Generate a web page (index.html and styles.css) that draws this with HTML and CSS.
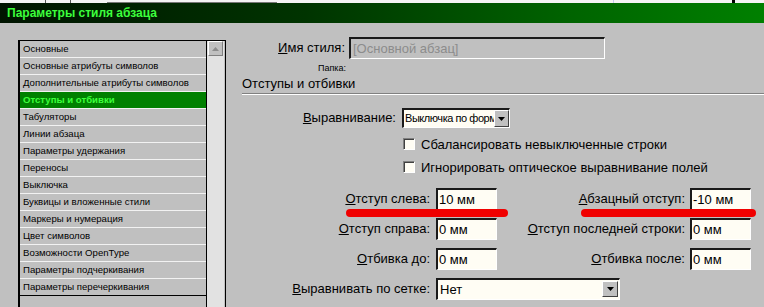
FILE: index.html
```html
<!DOCTYPE html>
<html lang="ru">
<head>
    <meta charset="UTF-8">
    <title>Параметры стиля абзаца</title>
    <link rel="stylesheet" href="styles.css">
</head>
<body>
    <div class="top-strip">
        <span class="tick t1"></span>
        <span class="tick t2"></span>
        <span class="scrap"></span>
        <span class="tick t3"></span>
        <span class="dot"></span>
    </div>
    <div class="title-bar">Параметры стиля абзаца</div>

    <div class="dialog">
        <div class="list-col">
            <div class="list-box">
                <ul class="list">
                    <li>Основные</li>
                    <li>Основные атрибуты символов</li>
                    <li>Дополнительные атрибуты символов</li>
                    <li class="active">Отступы и отбивки</li>
                    <li>Табуляторы</li>
                    <li>Линии абзаца</li>
                    <li>Параметры удержания</li>
                    <li>Переносы</li>
                    <li>Выключка</li>
                    <li>Буквицы и вложенные стили</li>
                    <li>Маркеры и нумерация</li>
                    <li>Цвет символов</li>
                    <li>Возможности OpenType</li>
                    <li>Параметры подчеркивания</li>
                    <li>Параметры перечеркивания</li>
                    <li class="empty"></li>
                </ul>
                <div class="scrollbar">
                    <div class="scroll-btn">
                        <svg width="7" height="4" viewBox="0 0 7 4"><path d="M0 4 L3.5 0 L7 4 Z" fill="#8c8c8c"/></svg>
                    </div>
                </div>
            </div>
        </div>

        <div class="panel">
            <div class="name-row">
                <label class="name-label"><u>И</u>мя стиля:</label>
                <div class="field name-field">[Основной абзац]</div>
            </div>
            <div class="folder-row">Папка:</div>
            <div class="section-title">Отступы и отбивки</div>

            <div class="align-row">
                <label class="align-label"><u>В</u>ыравнивание:</label>
                <div class="field select align-select">
                    <span class="select-text">Выключка по форм</span>
                    <span class="drop-btn"><svg width="7" height="4" viewBox="0 0 7 4"><path d="M0 0 L7 0 L3.5 4 Z" fill="#000"/></svg></span>
                </div>
            </div>
            <div class="check-row first">
                <span class="checkbox"></span>
                <span>Сбалансировать невыключенные строки</span>
            </div>
            <div class="check-row">
                <span class="checkbox"></span>
                <span>Игнорировать оптическое выравнивание полей</span>
            </div>

            <div class="field-row first">
                <label class="lbl-left"><u>О</u>тступ слева:</label>
                <div class="field num">10 мм</div>
                <label class="lbl-right"><u>А</u>бзацный отступ:</label>
                <div class="field num">-10 мм</div>
            </div>
            <div class="field-row">
                <label class="lbl-left"><u>О</u>тступ справа:</label>
                <div class="field num">0 мм</div>
                <label class="lbl-right"><u>О</u>тступ последней строки:</label>
                <div class="field num">0 мм</div>
            </div>
            <div class="field-row">
                <label class="lbl-left"><u>О</u>тбивка до:</label>
                <div class="field num">0 мм</div>
                <label class="lbl-right"><u>О</u>тбивка после:</label>
                <div class="field num">0 мм</div>
            </div>
            <div class="field-row">
                <label class="lbl-left"><u>В</u>ыравнивать по сетке:</label>
                <div class="field select grid-select">
                    <span class="select-text">Нет</span>
                    <span class="drop-btn"><svg width="7" height="4" viewBox="0 0 7 4"><path d="M0 0 L7 0 L3.5 4 Z" fill="#000"/></svg></span>
                </div>
            </div>

            <!-- red marker strokes drawn over the form -->
            <div class="marker marker-left"></div>
            <div class="marker marker-right"></div>
        </div>
    </div>
</body>
</html>
```

FILE: styles.css
```css
:root {
    --face: #c0c0c0;
    --dark: #1a1a1a;
    --shadow: #808080;
    --light: #ffffff;
    --input-bg: #fffdf4;
    --title-green: #3cff3c;
}

* {
    box-sizing: border-box;
}

html, body {
    margin: 0;
    width: 764px;
    height: 307px;
    overflow: hidden;
}

body {
    background: var(--face);
    font-family: 'Liberation Sans', Arial, sans-serif;
    font-size: 13px;
    color: #000;
}

/* scrap of the window behind */
.top-strip {
    height: 3px;
    background: #f4f4f4;
    display: flex;
    align-items: flex-end;
}

.tick {
    width: 1px;
    height: 3px;
    background: #555;
}

.t1 { margin-left: 45px; }
.t2 { margin-left: 24px; }
.t3 { margin-left: 336px; background: #c8c8f0; }

.scrap {
    margin-left: 36px;
    width: 170px;
    height: 1px;
    background: #777;
}

.dot {
    margin-left: 118px;
    width: 3px;
    height: 3px;
    background: #000;
}

.title-bar {
    height: 20px;
    background: linear-gradient(to right, #001400 0%, #003400 40%, #006400 75%, #008000 100%);
    color: var(--title-green);
    font-weight: bold;
    font-size: 12px;
    line-height: 20px;
    padding-left: 7px;
}

.dialog {
    display: flex;
    height: 284px;
}

/* left list */
.list-col {
    padding: 17px 0 0 18px;
    width: 228px;
}

.list-box {
    display: flex;
    border-top: 1px solid #000;
    border-left: 2px solid #000;
    border-right: 1px solid #000;
    height: 267px;
    width: 208px;
    overflow: hidden;
}

.list {
    list-style: none;
    margin: 0;
    padding: 0;
    width: 187px;
    border-right: 1px solid #000;
}

.list li {
    height: 17px;
    line-height: 16px;
    padding-left: 3px;
    font-size: 9.6px;
    border-bottom: 1px solid #f2f2f2;
    white-space: nowrap;
    overflow: hidden;
}

.list li.active {
    background: #008000;
    color: var(--title-green);
    font-weight: bold;
}

.list li.empty {
    border-top: 1px solid #000;
    border-bottom: none;
    height: 12px;
    margin-top: -1px;
}

.scrollbar {
    width: 17px;
    background: #e2e2e2;
    padding: 0 1px;
}

.scroll-btn {
    height: 15px;
    background: var(--face);
    border-top: 1px solid var(--light);
    border-left: 1px solid var(--light);
    border-right: 1px solid var(--shadow);
    border-bottom: 1px solid var(--shadow);
    display: flex;
    align-items: center;
    justify-content: center;
}

/* right panel */
.panel {
    position: relative;
    flex: 1;
    padding-left: 14px;
}

.field {
    height: 22px;
    line-height: 19px;
    background: var(--input-bg);
    border-top: 2px solid var(--dark);
    border-left: 2px solid var(--dark);
    border-right: 1px solid var(--light);
    border-bottom: 1px solid var(--light);
    padding-left: 1px;
    white-space: nowrap;
    overflow: hidden;
}

.name-row {
    display: flex;
    margin-top: 14px;
}

.name-label {
    width: 107px;
    padding-right: 4px;
    text-align: right;
    line-height: 22px;
}

.name-field {
    width: 256px;
    background: var(--face);
    color: #8c8c8c;
    padding-left: 2px;
}

.folder-row {
    width: 104px;
    text-align: right;
    font-size: 9px;
    line-height: 11px;
    margin-top: 4px;
}

.section-title {
    margin-top: 1px;
    line-height: 17px;
    height: 19px;
    border-bottom: 1px solid var(--shadow);
    box-shadow: 0 1px 0 var(--light);
}

.align-row {
    display: flex;
    margin-top: 14px;
}

.align-label {
    width: 160px;
    padding-right: 6px;
    text-align: right;
    line-height: 20px;
}

.select {
    display: flex;
    justify-content: space-between;
}

.align-select {
    width: 108px;
    height: 20px;
    line-height: 17px;
    padding-left: 0;
}

.select-text {
    flex: 1;
    min-width: 0;
    overflow: hidden;
    padding-left: 1px;
}

.align-select .select-text {
    font-size: 11px;
    letter-spacing: -0.45px;
}

.drop-btn {
    flex: none;
    width: 16px;
    height: 16px;
    margin: 0 1px 0 0;
    background: var(--face);
    border-top: 1px solid var(--light);
    border-left: 1px solid var(--light);
    border-right: 1px solid #404040;
    border-bottom: 1px solid #404040;
    display: flex;
    align-items: center;
    justify-content: center;
}

.align-select .drop-btn {
    width: 15px;
    height: 17px;
    margin-right: 0;
}

.check-row {
    display: flex;
    align-items: center;
    gap: 6px;
    height: 16px;
    margin-top: 7px;
    margin-left: 161px;
    white-space: nowrap;
}

.check-row.first {
    margin-top: 8px;
}

.checkbox {
    width: 12px;
    height: 12px;
    background: var(--input-bg);
    border-top: 1px solid var(--shadow);
    border-left: 1px solid var(--shadow);
    border-right: 1px solid var(--light);
    border-bottom: 1px solid var(--light);
    box-shadow: inset 1px 1px 0 #404040;
}

.field-row {
    display: flex;
    margin-top: 8px;
    white-space: nowrap;
}

.field-row.first {
    margin-top: 13px;
}

.lbl-left, .lbl-right {
    text-align: right;
    line-height: 22px;
}

.lbl-left {
    width: 194px;
    padding-right: 6px;
}

.lbl-right {
    width: 193px;
    padding-right: 5px;
}

.num {
    width: 61px;
}

.grid-select {
    width: 184px;
}

.grid-select .drop-btn {
    margin-top: 1px;
}

.marker {
    position: absolute;
    height: 8px;
    border-radius: 4px;
    background: #f00000;
}

.marker-left {
    left: 118px;
    width: 162px;
    top: 186px;
}

.marker-right {
    left: 353px;
    width: 175px;
    top: 186px;
}
```
